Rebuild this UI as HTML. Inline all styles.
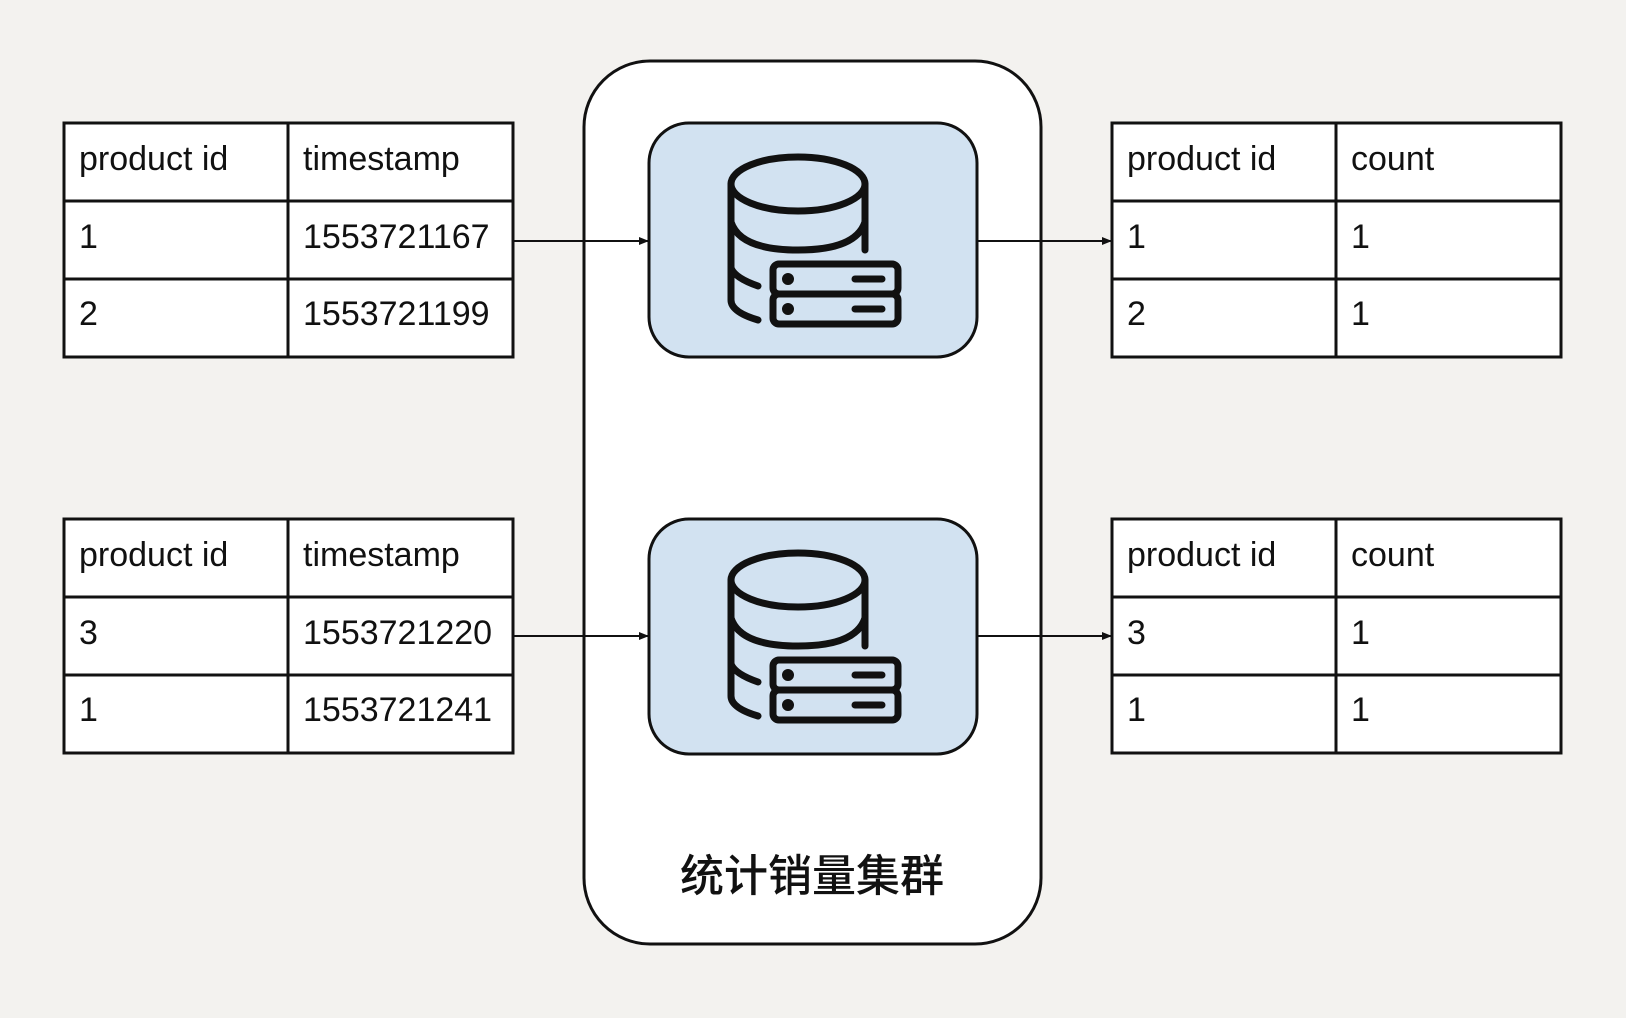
<!DOCTYPE html>
<html><head><meta charset="utf-8"><style>
html,body{margin:0;padding:0;background:#f3f2ef;}
svg{display:block}
text{font-family:"Liberation Sans",Arial,sans-serif;font-size:34px;fill:#111;}
.cn{font-family:"Liberation Sans","Noto Sans CJK SC",sans-serif;font-size:44px;font-weight:500;}
</style></head><body>
<svg width="1626" height="1018" viewBox="0 0 1626 1018">
<defs>
<marker id="ar" markerWidth="10" markerHeight="10" refX="9" refY="5" orient="auto" markerUnits="userSpaceOnUse"><path d="M0,1 L10,5 L0,9 Z" fill="#111"/></marker>
<g id="tbl" stroke="#111" stroke-width="3" fill="#fff">
<rect x="0" y="0" width="449" height="234"/>
<line x1="0" y1="78" x2="449" y2="78"/>
<line x1="0" y1="156" x2="449" y2="156"/>
<line x1="224" y1="0" x2="224" y2="234"/>
</g>
<g id="icon" fill="none" stroke="#111" stroke-width="7" stroke-linecap="round">
<ellipse cx="798" cy="184" rx="67" ry="27"/>
<path d="M731,184 V300 Q731,312 758,320"/>
<path d="M865,184 V250"/>
<path d="M731,222 Q740,250 798,250 Q856,250 865,222"/>
<path d="M731,268 Q735,278 758,286"/>
<rect x="773" y="264" width="125" height="30" rx="6"/>
<rect x="773" y="294" width="125" height="30" rx="6"/>
<path d="M855,279 H882 M855,309 H882"/>
<circle cx="788" cy="279" r="2.5" fill="#111"/>
<circle cx="788" cy="309" r="2.5" fill="#111"/>
</g>
</defs>

<rect x="584" y="61" width="457" height="883" rx="66" fill="#fff" stroke="#111" stroke-width="3"/>
<rect x="649" y="123" width="328" height="234" rx="40" fill="#d2e2f1" stroke="#111" stroke-width="3"/>
<rect x="649" y="519" width="328" height="235" rx="40" fill="#d2e2f1" stroke="#111" stroke-width="3"/>
<use href="#icon"/>
<use href="#icon" transform="translate(0,396)"/>

<g stroke="#111" stroke-width="2">
<line x1="513" y1="241" x2="648" y2="241" marker-end="url(#ar)"/>
<line x1="513" y1="636" x2="648" y2="636" marker-end="url(#ar)"/>
<line x1="977" y1="241" x2="1111" y2="241" marker-end="url(#ar)"/>
<line x1="977" y1="636" x2="1111" y2="636" marker-end="url(#ar)"/>
</g>

<use href="#tbl" transform="translate(64,123)"/>
<use href="#tbl" transform="translate(64,519)"/>
<use href="#tbl" transform="translate(1112,123)"/>
<use href="#tbl" transform="translate(1112,519)"/>

<text x="79" y="170">product id</text><text x="303" y="170">timestamp</text>
<text x="79" y="248">1</text><text x="303" y="248">1553721167</text>
<text x="79" y="325">2</text><text x="303" y="325">1553721199</text>

<text x="79" y="566">product id</text><text x="303" y="566">timestamp</text>
<text x="79" y="644">3</text><text x="303" y="644">1553721220</text>
<text x="79" y="721">1</text><text x="303" y="721">1553721241</text>

<text x="1127" y="170">product id</text><text x="1351" y="170">count</text>
<text x="1127" y="248">1</text><text x="1351" y="248">1</text>
<text x="1127" y="325">2</text><text x="1351" y="325">1</text>

<text x="1127" y="566">product id</text><text x="1351" y="566">count</text>
<text x="1127" y="644">3</text><text x="1351" y="644">1</text>
<text x="1127" y="721">1</text><text x="1351" y="721">1</text>

<text class="cn" x="812" y="891" text-anchor="middle">统计销量集群</text>
</svg>
</body></html>
